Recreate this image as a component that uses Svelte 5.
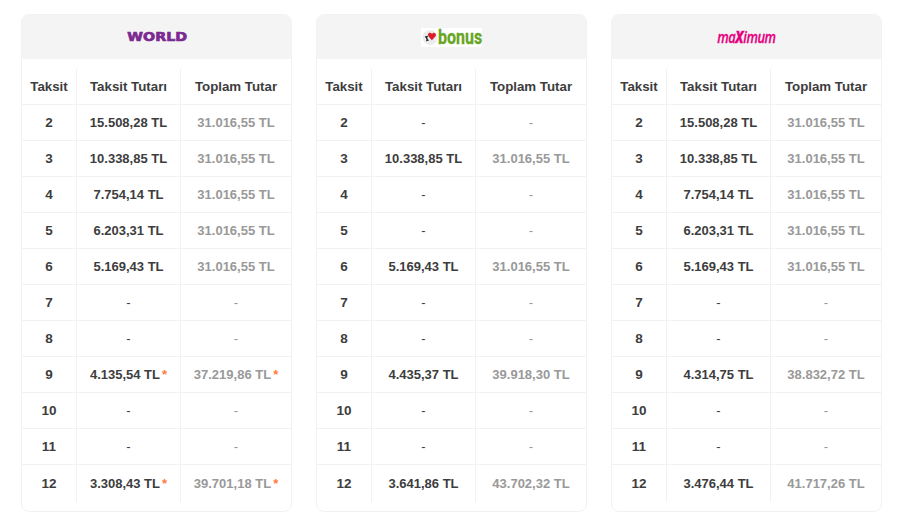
<script>
  const rows = [2, 3, 4, 5, 6, 7, 8, 9, 10, 11, 12];

  const cards = [
    {
      id: 'world',
      values: {
        2: ['15.508,28 TL', '31.016,55 TL'],
        3: ['10.338,85 TL', '31.016,55 TL'],
        4: ['7.754,14 TL', '31.016,55 TL'],
        5: ['6.203,31 TL', '31.016,55 TL'],
        6: ['5.169,43 TL', '31.016,55 TL'],
        9: ['4.135,54 TL', '37.219,86 TL', true],
        12: ['3.308,43 TL', '39.701,18 TL', true]
      }
    },
    {
      id: 'bonus',
      values: {
        3: ['10.338,85 TL', '31.016,55 TL'],
        6: ['5.169,43 TL', '31.016,55 TL'],
        9: ['4.435,37 TL', '39.918,30 TL'],
        12: ['3.641,86 TL', '43.702,32 TL']
      }
    },
    {
      id: 'maximum',
      values: {
        2: ['15.508,28 TL', '31.016,55 TL'],
        3: ['10.338,85 TL', '31.016,55 TL'],
        4: ['7.754,14 TL', '31.016,55 TL'],
        5: ['6.203,31 TL', '31.016,55 TL'],
        6: ['5.169,43 TL', '31.016,55 TL'],
        9: ['4.314,75 TL', '38.832,72 TL'],
        12: ['3.476,44 TL', '41.717,26 TL']
      }
    }
  ];
</script>

<div class="page">
  {#each cards as card}
    <section class="card">
      <header class="brand">
        {#if card.id === 'world'}
          <span class="logo-world">WORLD</span>
        {:else if card.id === 'bonus'}
          <span class="logo-bonus">
            <svg class="badge" width="16" height="17" viewBox="0 0 17 17" aria-hidden="true">
              <circle cx="8.5" cy="8.5" r="8" fill="#ececec" />
              <path d="M3 7.5l3-.8.3 1-.8.3.8 3 .8-.2.3 1-3 .8-.3-1 .8-.2-.8-3-.8.2z" fill="#1c1c1c" />
              <path d="M10.5 11.5L7 7.4C5.6 5.6 6.8 3.2 8.8 3.4c.9.1 1.5.7 1.9 1.4.5-.8 1.4-1.4 2.4-1.2 1.9.3 2.4 2.4 1.1 3.9z" fill="#d9202a" />
            </svg>
            <span class="bonus-text">bonus</span>
          </span>
        {:else}
          <span class="logo-maximum">ma<span class="big-x">x</span>imum</span>
        {/if}
      </header>

      <table>
        <thead>
          <tr>
            <th>Taksit</th>
            <th>Taksit Tutarı</th>
            <th>Toplam Tutar</th>
          </tr>
        </thead>
        <tbody>
          {#each rows as n}
            {@const v = card.values[n]}
            <tr>
              <td class="num">{n}</td>
              <td class="amount">
                {#if v}
                  {v[0]}{#if v[2]}<span class="star">*</span>{/if}
                {:else}
                  <span class="dash">-</span>
                {/if}
              </td>
              <td class="total">
                {#if v}
                  {v[1]}{#if v[2]}<span class="star">*</span>{/if}
                {:else}
                  <span class="dash">-</span>
                {/if}
              </td>
            </tr>
          {/each}
        </tbody>
      </table>
    </section>
  {/each}
</div>

<style>
  :global(body) {
    background: #fff;
  }

  .page {
    display: flex;
    gap: 24px;
    width: 861px;
    padding: 14px 0 0 21px;
    font-family: "Liberation Sans", Arial, sans-serif;
  }

  .card {
    width: 271px;
    height: 498px;
    box-sizing: border-box;
    border: 1px solid #f2f2f2;
    border-radius: 8px;
    overflow: hidden;
    flex-shrink: 0;
  }

  .brand {
    display: flex;
    align-items: center;
    justify-content: center;
    height: 44px;
    background: #f4f4f4;
  }

  .logo-world {
    margin-left: 2px;
    font-family: "DejaVu Sans", sans-serif;
    font-weight: 700;
    font-size: 12.5px;
    line-height: 1;
    color: #7b2a90;
    transform: scaleX(1.14);
    -webkit-text-stroke: 0.7px #7b2a90;
  }

  .logo-bonus {
    display: flex;
    align-items: center;
    background: #fff;
    width: 61px;
    height: 19px;
    margin-top: 1px;
    box-sizing: border-box;
    padding-left: 1px;
  }

  .badge {
    flex-shrink: 0;
  }

  .bonus-text {
    font-family: Roboto, sans-serif;
    font-weight: 700;
    font-size: 20px;
    line-height: 19px;
    color: #66a61e;
    transform: scaleX(0.8);
    transform-origin: left center;
    -webkit-text-stroke: 0.3px #66a61e;
  }

  .logo-maximum {
    margin-bottom: 4px;
    font-family: "Open Sans", sans-serif;
    font-style: italic;
    font-weight: 600;
    font-size: 17px;
    line-height: 1;
    color: #e6007e;
    letter-spacing: -0.6px;
    transform: scaleX(0.76);
    -webkit-text-stroke: 0.3px #e6007e;
  }

  .big-x {
    font-size: 21px;
    font-weight: 700;
  }

  table {
    width: 269px;
    margin-top: 10px;
    border-collapse: separate;
    border-spacing: 0;
    table-layout: fixed;
    font-size: 13px;
  }

  th:nth-child(1) {
    width: 55px;
  }

  th:nth-child(2) {
    width: 104px;
  }

  th,
  td {
    height: 36px;
    padding: 0;
    box-sizing: border-box;
    text-align: center;
    color: #3d3d3d;
    font-weight: 700;
    border-right: 1px solid #f2f2f2;
    border-bottom: 1px solid #f2f2f2;
  }

  th {
    font-size: 13.3px;
  }

  td.num {
    font-size: 13.5px;
  }

  th:last-child,
  td:last-child {
    border-right: 0;
  }

  tbody tr:last-child td {
    height: 37px;
    border-bottom: 0;
  }

  td.total {
    color: #999;
  }

  .dash {
    font-weight: 400;
  }

  .star {
    margin-left: 2px;
    color: #ff7a45;
  }
</style>
